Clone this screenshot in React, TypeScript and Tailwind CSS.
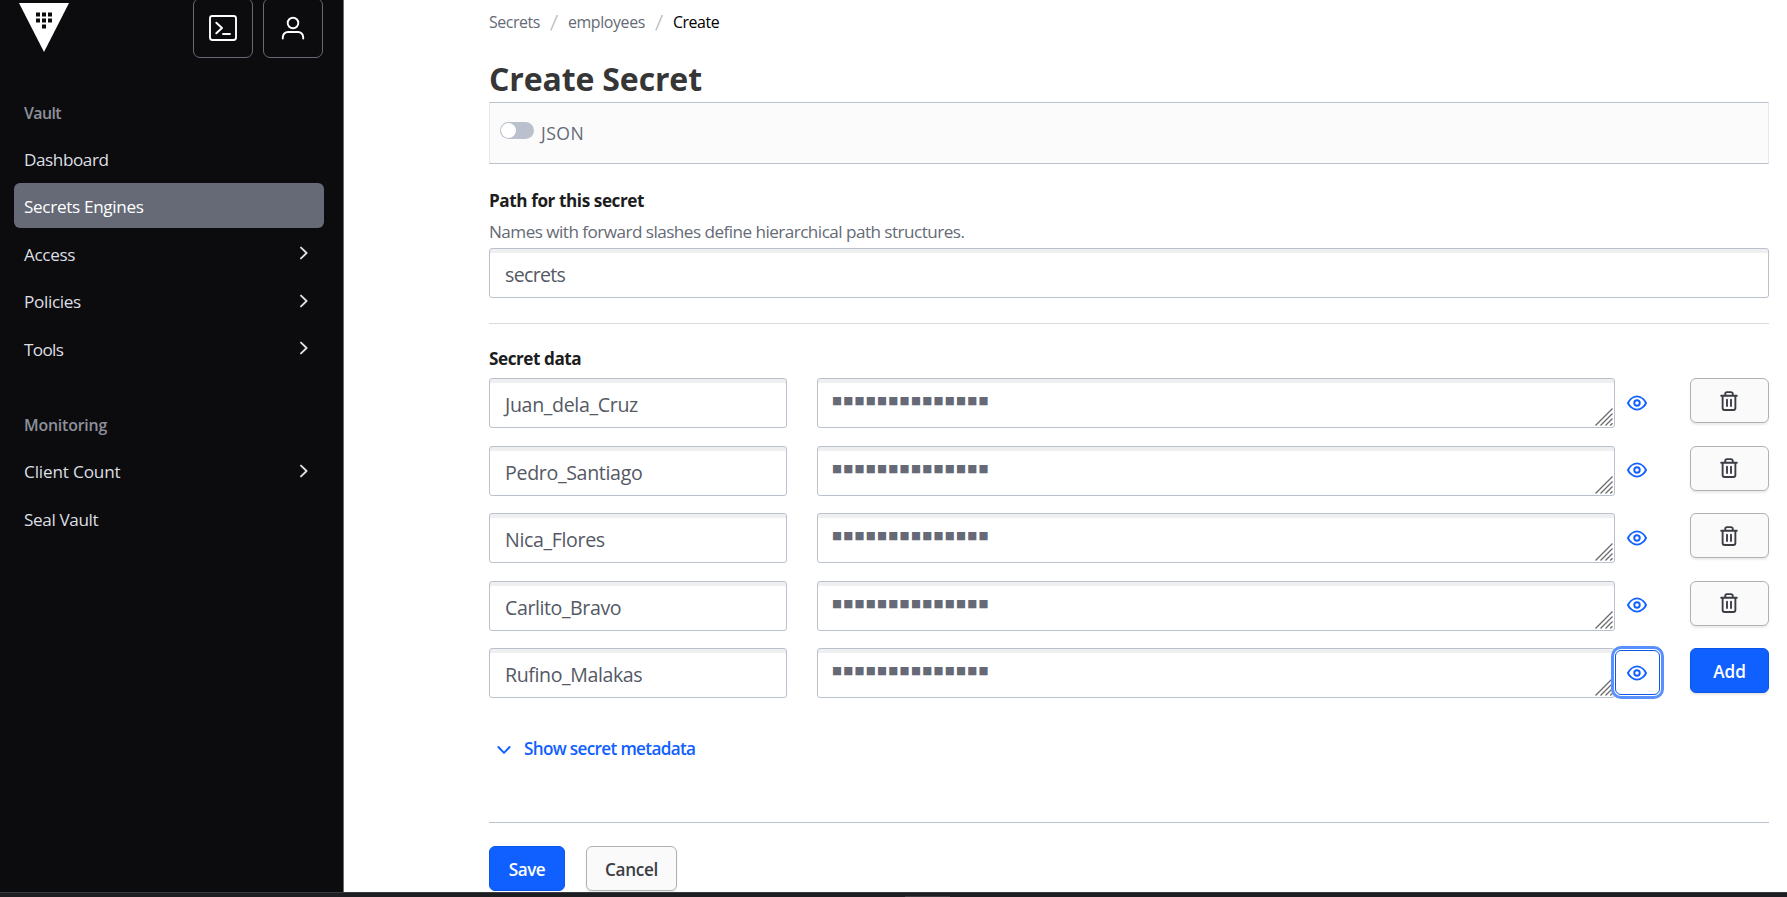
import React from 'react';

function ChevronRight() {
  return (
    <svg className="h-5 w-5" viewBox="0 0 20 20" fill="none" stroke="currentColor" strokeWidth="1.9" strokeLinecap="round" strokeLinejoin="round">
      <path d="M7 4.6 12.6 10 7 15.4" />
    </svg>
  );
}

function EyeIcon() {
  return (
    <svg className="h-5 w-5" viewBox="0 0 16 16" fill="none" stroke="currentColor" strokeWidth="1.5" strokeLinejoin="round">
      <path d="M.75 8C1.6 6.2 4.2 2.7 8 2.7S14.4 6.2 15.25 8C14.4 9.8 11.8 13.3 8 13.3S1.6 9.8.75 8Z" />
      <circle cx="8" cy="8" r="2.2" />
    </svg>
  );
}

function TrashIcon() {
  return (
    <svg className="h-5 w-5" viewBox="0 0 16 16" fill="none" stroke="currentColor" strokeWidth="1.5" strokeLinecap="round" strokeLinejoin="round">
      <path d="M1.75 3.75h12.5M5 3.5V2.25A1.4 1.4 0 0 1 6.4.85h3.2A1.4 1.4 0 0 1 11 2.25V3.5M2.9 4v9.6a1.6 1.6 0 0 0 1.6 1.6h7a1.6 1.6 0 0 0 1.6-1.6V4M6.4 7v5M9.6 7v5" />
    </svg>
  );
}

function ResizeHandle() {
  return (
    <svg className="absolute right-px bottom-px h-[18px] w-[18px]" viewBox="0 0 18 18" fill="none" stroke="#6b6b6b" strokeWidth="1.3">
      <path d="M.5 17.5 17.5.5M5.5 17.5l12-12M10.5 17.5l7-7M15.2 17.5l2.3-2.3" />
    </svg>
  );
}

type Item = { label: string; tracking: string; arrow?: boolean; active?: boolean };

const vaultItems: Item[] = [
  { label: 'Dashboard', tracking: 'tracking-[-0.43px]' },
  { label: 'Secrets Engines', tracking: 'tracking-[-0.33px]', active: true },
  { label: 'Access', tracking: 'tracking-[-0.35px]', arrow: true },
  { label: 'Policies', tracking: 'tracking-[-0.35px]', arrow: true },
  { label: 'Tools', tracking: 'tracking-[-0.65px]', arrow: true },
];

const monitoringItems: Item[] = [
  { label: 'Client Count', tracking: 'tracking-[-0.16px]', arrow: true },
  { label: 'Seal Vault', tracking: 'tracking-[-0.38px]' },
];

const secrets = [
  { name: 'Juan_dela_Cruz', tracking: 'tracking-[-0.34px]' },
  { name: 'Pedro_Santiago', tracking: 'tracking-[-0.33px]' },
  { name: 'Nica_Flores', tracking: 'tracking-[-0.36px]' },
  { name: 'Carlito_Bravo', tracking: 'tracking-[-0.42px]' },
  { name: 'Rufino_Malakas', tracking: 'tracking-[-0.4px]' },
];

function NavList({ items }: { items: Item[] }) {
  return (
    <ul className="flex flex-col gap-[2.5px]">
      {items.map((item) => (
        <li
          key={item.label}
          className={`flex h-[45px] items-center justify-between rounded-[6px] px-[10px] text-[17.15px] ${item.active ? 'bg-[#656a76] text-white' : 'text-[#dedfe3]'}`}
        >
          <span className={`${item.active ? 'pt-[2px]' : 'pt-[3px]'} ${item.tracking}`}>{item.label}</span>
          {item.arrow && <ChevronRight />}
        </li>
      ))}
    </ul>
  );
}

const field = 'relative flex h-[50px] rounded-[3px] border border-[#bac1cc] bg-white shadow-[inset_0_5px_1px_-1px_#efeff1]';

export default function App() {
  return (
    <div className="flex h-[897px] w-[1787px] flex-col overflow-hidden bg-white font-['Open_Sans','Noto_Sans',sans-serif]">
      <div className="flex h-[892px]">
        <aside className="w-[344px] shrink-0 border-r border-[#6b6d75] bg-[#0c0c0e] pr-[19px] pl-[14px]">
          <div className="flex h-[58px] justify-between pr-px pl-[5px]">
            <svg className="mt-[3px] h-[49px] w-[50px]" viewBox="0 0 50 49">
              <path d="M0 0h50L25 49Z" fill="#fff" />
              <path d="M17 9.5h4v4h-4zM23 9.5h4v4h-4zM29 9.5h4v4h-4zM17 15.5h4v4h-4zM23 15.5h4v4h-4zM29 15.5h4v4h-4zM23 21.5h4v4h-4z" fill="#0c0c0e" />
            </svg>
            <div className="-mt-[2px] flex gap-[10px]">
              <button className="flex h-[60px] w-[60px] items-center justify-center rounded-[7px] border border-[#656a76] text-white">
                <svg className="h-[30px] w-[30px]" viewBox="0 0 30 30" fill="none" stroke="currentColor" strokeWidth="1.9" strokeLinecap="round" strokeLinejoin="round">
                  <rect x="2" y="3" width="26" height="24" rx="2.4" />
                  <path d="M8.3 9.7 14 15l-5.7 5.3M15 21h7" />
                </svg>
              </button>
              <button className="flex h-[60px] w-[60px] items-center justify-center rounded-[7px] border border-[#656a76] text-white">
                <svg className="h-[30px] w-[30px]" viewBox="0 0 30 30" fill="none" stroke="currentColor" strokeWidth="1.9" strokeLinecap="round" strokeLinejoin="round">
                  <circle cx="15" cy="10" r="5.3" />
                  <path d="M4.8 25.6v-1.4a5.2 5.2 0 0 1 5.2-5.2h10a5.2 5.2 0 0 1 5.2 5.2v1.4" />
                </svg>
              </button>
            </div>
          </div>
          <div className="mt-[45px] pl-[10px] text-[15.9px] leading-5 font-semibold tracking-[-0.6px] text-[#8c909c]">Vault</div>
          <div className="mt-[12.5px]">
            <NavList items={vaultItems} />
          </div>
          <div className="mt-[44px] pl-[10px] text-[15.9px] leading-5 font-semibold tracking-[-0.2px] text-[#8c909c]">Monitoring</div>
          <div className="mt-[13.5px]">
            <NavList items={monitoringItems} />
          </div>
        </aside>

        <main className="w-[1425px] pl-[145px]">
          <nav className="flex pt-[12px] text-[15.9px] leading-5 text-[#656a76]">
            <span className="w-[61px] tracking-[-0.45px]">Secrets</span>
            <svg className="mt-[3px] mr-[10px] h-[16px] w-[8px]" viewBox="0 0 8 16" fill="none" stroke="#c2c5cb" strokeWidth="1.6">
              <path d="M7.3 0 .8 15.5" />
            </svg>
            <span className="w-[87px] tracking-[-0.38px]">employees</span>
            <svg className="mt-[3px] mr-[10px] h-[16px] w-[8px]" viewBox="0 0 8 16" fill="none" stroke="#c2c5cb" strokeWidth="1.6">
              <path d="M7.3 0 .8 15.5" />
            </svg>
            <span className="tracking-[-0.45px] text-black">Create</span>
          </nav>

          <h1 className="mt-[26.5px] text-[32px] leading-10 font-bold tracking-[-0.13px] text-[#363636]">Create Secret</h1>

          <div className="mt-[3.5px] flex h-[62px] border border-x-[#e6e8ec] border-y-[#bac1cc] bg-[#fbfbfb] pl-[10px]">
            <span className="mt-[19px] flex h-[17px] w-[34px] rounded-full bg-[#bac1cc] p-px">
              <span className="h-[15px] w-[15px] rounded-full bg-white" />
            </span>
            <span className="mt-[18px] ml-[7px] text-[17.6px] leading-6 tracking-[0.5px] text-[#656a76]">JSON</span>
          </div>

          <label className="mt-[24.5px] block text-[17.15px] leading-6 font-bold tracking-[-0.42px] text-[#1c1d20]">Path for this secret</label>
          <p className="mt-[7px] text-[17.15px] leading-6 tracking-[-0.54px] text-[#656a76]">Names with forward slashes define hierarchical path structures.</p>
          <div className={`mt-[4.5px] items-center pl-[15px] ${field}`}>
            <span className="pt-[4px] text-[19.6px] tracking-[-0.7px] text-[#545964]">secrets</span>
          </div>
          <hr className="mt-[25px] border-[#dbdbdf]" />

          <h2 className="mt-[22.5px] text-[17.15px] leading-6 font-bold tracking-[-0.45px] text-[#1c1d20]">Secret data</h2>
          <div className="mt-[7.5px] flex flex-col gap-[17.5px]">
            {secrets.map((secret, i) => {
              const last = i === secrets.length - 1;
              return (
                <div key={secret.name} className="flex h-[50px]">
                  <div className={`w-[298px] items-center pl-[15px] ${field}`}>
                    <span className={`pt-[3.5px] text-[19.6px] text-[#545964] ${secret.tracking}`}>{secret.name}</span>
                  </div>
                  <div className={`ml-[30px] w-[798px] pt-[13px] pl-[14px] ${field}`}>
                    <span className="font-['DejaVu_Sans'] text-[10.6px] leading-[16px] tracking-[1.26px] text-[#656a76]">■■■■■■■■■■■■■■</span>
                    <ResizeHandle />
                  </div>
                  <button
                    className={`relative mt-[2px] flex h-[45px] w-[45px] items-center justify-center rounded-[6px] pr-px text-[#1060ff] ${last ? 'border border-[#0c56e9] bg-white shadow-[0_0_0_1px_#ffffff,0_0_0_4px_#5990ff]' : ''}`}
                  >
                    <EyeIcon />
                  </button>
                  {last ? (
                    <button className="ml-[30px] flex h-[45px] w-[79px] items-center justify-center rounded-[6px] border border-[#0c56e9] bg-[#1060ff] pt-[2px] text-[17.15px] font-semibold text-white shadow-[0_2px_2px_rgba(59,61,69,0.12)]">Add</button>
                  ) : (
                    <button className="ml-[30px] flex h-[45px] w-[79px] items-center justify-center rounded-[6px] border border-[#afb1b6] bg-[#fafafa] pr-px text-[#3b3d45] shadow-[0_2px_2px_rgba(59,61,69,0.1)]">
                      <TrashIcon />
                    </button>
                  )}
                </div>
              );
            })}
          </div>

          <button className="mt-[39px] flex items-center text-[#1060ff]">
            <svg className="mt-[1px] ml-[5px] h-5 w-5" viewBox="0 0 20 20" fill="none" stroke="currentColor" strokeWidth="1.9" strokeLinecap="round" strokeLinejoin="round">
              <path d="M4.4 7 10 12.8 15.6 7" />
            </svg>
            <span className="ml-[10px] text-[17.15px] leading-6 font-semibold tracking-[-0.67px]">Show secret metadata</span>
          </button>

          <hr className="mt-[61px] border-[#bac1cc]" />
          <div className="mt-[23px] flex gap-[21px]">
            <button className="flex h-[45px] w-[76px] items-center justify-center rounded-[6px] border border-[#0c56e9] bg-[#1060ff] pt-[2px] text-[17.15px] font-semibold tracking-[-0.5px] text-white">Save</button>
            <button className="flex h-[45px] w-[91px] items-center justify-center rounded-[6px] border border-[#afb1b6] bg-[#fafafa] pt-[2px] text-[17.15px] font-semibold tracking-[-0.28px] text-[#3b3d45] shadow-[0_2px_2px_rgba(59,61,69,0.1)]">Cancel</button>
          </div>
        </main>
      </div>
      <div className="flex h-[5px] items-end border-t border-[#3a3b3f] bg-[#1d1e22] pl-[905px]">
        <span className="h-px w-[45px] bg-[#3c3d41]" />
      </div>
    </div>
  );
}
